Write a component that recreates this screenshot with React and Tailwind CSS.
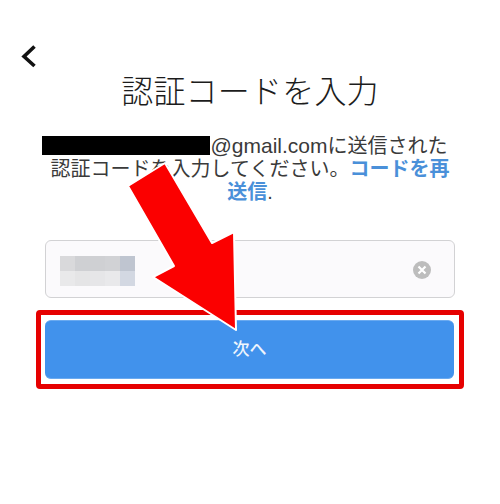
const fontStack = { fontFamily: '"Liberation Sans", "Noto Sans CJK JP", sans-serif' };

const blurCells = [
  'bg-[#d9d9db]', 'bg-[#cfd0d3]', 'bg-[#cfd0d3]', 'bg-[#d1d2d5]', 'bg-[#bfc5d0]',
  'bg-[#e9e9ea]', 'bg-[#e5e5e6]', 'bg-[#e6e6e8]', 'bg-[#e9e9eb]', 'bg-[#d3d8e2]',
];

const App = () => {
  return (
    <div className="relative w-[500px] h-[504px] overflow-hidden bg-white" style={fontStack}>
      {/* Back chevron */}
      <div className="px-[21px] pt-[44px]">
        <svg className="block" width="16" height="24" viewBox="0 0 16 24" fill="none">
          <path d="M13.5 2.5 L3 12.5 L13.5 22" stroke="#111" strokeWidth="3.6" />
        </svg>
      </div>

      <h1 className="mt-[2px] text-center text-[32px] tracking-[0.2px] leading-[44px] font-extralight text-[#1c1c1c]">
        認証コードを入力
      </h1>

      <p className="mx-auto mt-[20px] w-[412px] text-center text-[20px] leading-[23px] text-[#3a3a3a]">
        <span className="inline-block w-[168px] h-[19px] ml-[-10px] bg-black align-[-2px]"></span>
        <span className="text-[21px]">@gmail.com</span>に送信された認証コードを入力してください。
        <span className="font-bold text-[#4a90d9]">コードを再送信</span>.
      </p>

      {/* Code input */}
      <div className="mx-[45px] mt-[36px] h-[58px] flex items-center justify-between rounded-md border-[1.5px] border-[#d2d2d4] bg-[#fbfafc] pt-[2px] pl-[14px] pr-[23px]">
        <div className="grid grid-cols-5 w-[75px] h-[30px] mt-[2px] blur-[0.5px]">
          {blurCells.map((c, i) => (
            <div key={i} className={c}></div>
          ))}
        </div>
        <svg width="18" height="18" viewBox="0 0 18 18">
          <circle cx="9" cy="9" r="9" fill="#bdbdbd" />
          <path d="M5.5 5.5 L12.5 12.5 M12.5 5.5 L5.5 12.5" stroke="#fff" strokeWidth="2.2" />
        </svg>
      </div>

      {/* Next button with highlight frame */}
      <div className="mx-[36px] mt-[12px] h-[79px] rounded-[4px] border-[5px] border-[#e60000] py-[5px] pl-[4px] pr-[5px]">
        <button className="w-full h-full rounded-md border-y border-[#6aaaf0] bg-[#4192ec] text-[17px] font-medium text-[#eef5fd]">
          次へ
        </button>
      </div>

      {/* Red arrow overlay */}
      <svg className="absolute inset-0" width="500" height="504" viewBox="0 0 500 504">
        <polygon
          points="165,163 128,186 174,266 153,277 236,330 234,232 212,243"
          fill="#fb0000"
          stroke="#fff"
          strokeWidth="2"
          strokeLinejoin="round"
        />
      </svg>
    </div>
  );
};

export default App;
